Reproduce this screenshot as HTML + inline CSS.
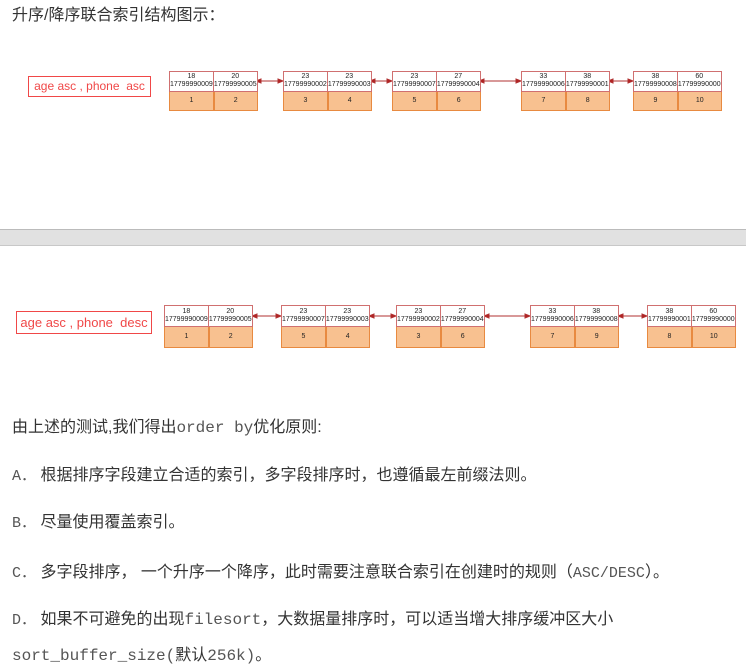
<!DOCTYPE html>
<html><head><meta charset="utf-8"><style>
body{margin:0;width:746px;height:668px;background:#fff;position:relative;overflow:hidden;font-family:"Liberation Sans","Noto Sans CJK SC",sans-serif;color:#333}
.t{position:absolute;left:12px;font-size:16px;white-space:nowrap;line-height:20px}
.m{font-family:"Liberation Mono","Noto Sans CJK SC",monospace;color:#555;font-size:15px}
.n{position:absolute;display:flex;font-family:"Liberation Sans",sans-serif;font-size:7px;color:#222}
.c{flex:1;display:flex;flex-direction:column}
.w{background:#fff;border:1px solid #d07070;text-align:center;line-height:8px;display:flex;flex-direction:column;justify-content:center}
.o{background:#f8c190;border:1px solid #e88a40;border-top:none;text-align:center;display:flex;align-items:center;justify-content:center}
.c+.c .w{border-left:none}.c+.c .o{border-left:1px solid #e88a40}
.lbl{position:absolute;border:1px solid #f04848;color:#f04848;font-size:12px;text-align:center;white-space:nowrap}
</style></head><body>
<div class="t" style="top:6px">升序/降序联合索引结构图示：</div>
<div class="lbl" style="left:28px;top:76px;width:121px;height:19px;line-height:19px">age asc , phone &nbsp;asc</div>
<div class="lbl" style="left:16px;top:311px;width:134px;height:21px;line-height:21px;font-size:13px">age asc , phone &nbsp;desc</div>

<div style="position:absolute;left:0;top:229px;width:746px;height:17px;background:#e1e1e1;border-top:1px solid #bbb;border-bottom:1px solid #c8c8c8;box-sizing:border-box"></div>

<svg width="746" height="668" style="position:absolute;left:0;top:0" fill="#b02020" stroke="#b03030">
<g stroke-width="1">
<line x1="258" y1="81" x2="281" y2="81"/><polygon points="256,81 261,79 261,83"/><polygon points="283,81 278,79 278,83"/>
<line x1="372" y1="81" x2="390" y2="81"/><polygon points="370,81 375,79 375,83"/><polygon points="392,81 387,79 387,83"/>
<line x1="481" y1="81" x2="519" y2="81"/><polygon points="479,81 484,79 484,83"/><polygon points="521,81 516,79 516,83"/>
<line x1="610" y1="81" x2="631" y2="81"/><polygon points="608,81 613,79 613,83"/><polygon points="633,81 628,79 628,83"/>
<line x1="254" y1="316" x2="279" y2="316"/><polygon points="252,316 257,314 257,318"/><polygon points="281,316 276,314 276,318"/>
<line x1="371" y1="316" x2="394" y2="316"/><polygon points="369,316 374,314 374,318"/><polygon points="396,316 391,314 391,318"/>
<line x1="486" y1="316" x2="528" y2="316"/><polygon points="484,316 489,314 489,318"/><polygon points="530,316 525,314 525,318"/>
<line x1="620" y1="316" x2="645" y2="316"/><polygon points="618,316 623,314 623,318"/><polygon points="647,316 642,314 642,318"/>
</g></svg>

<div class="n" style="left:169px;top:71px;width:87px;height:40px"><div class="c"><div class="w" style="height:20px">18<br>17799990009</div><div class="o" style="height:20px">1</div></div><div class="c"><div class="w" style="height:20px">20<br>17799990005</div><div class="o" style="height:20px">2</div></div></div>
<div class="n" style="left:283px;top:71px;width:87px;height:40px"><div class="c"><div class="w" style="height:20px">23<br>17799990002</div><div class="o" style="height:20px">3</div></div><div class="c"><div class="w" style="height:20px">23<br>17799990003</div><div class="o" style="height:20px">4</div></div></div>
<div class="n" style="left:392px;top:71px;width:87px;height:40px"><div class="c"><div class="w" style="height:20px">23<br>17799990007</div><div class="o" style="height:20px">5</div></div><div class="c"><div class="w" style="height:20px">27<br>17799990004</div><div class="o" style="height:20px">6</div></div></div>
<div class="n" style="left:521px;top:71px;width:87px;height:40px"><div class="c"><div class="w" style="height:20px">33<br>17799990006</div><div class="o" style="height:20px">7</div></div><div class="c"><div class="w" style="height:20px">38<br>17799990001</div><div class="o" style="height:20px">8</div></div></div>
<div class="n" style="left:633px;top:71px;width:87px;height:40px"><div class="c"><div class="w" style="height:20px">38<br>17799990008</div><div class="o" style="height:20px">9</div></div><div class="c"><div class="w" style="height:20px">60<br>17799990000</div><div class="o" style="height:20px">10</div></div></div>

<div class="n" style="left:164px;top:305px;width:88px;height:43px"><div class="c"><div class="w" style="height:21px">18<br>17799990009</div><div class="o" style="height:22px">1</div></div><div class="c"><div class="w" style="height:21px">20<br>17799990005</div><div class="o" style="height:22px">2</div></div></div>
<div class="n" style="left:281px;top:305px;width:88px;height:43px"><div class="c"><div class="w" style="height:21px">23<br>17799990007</div><div class="o" style="height:22px">5</div></div><div class="c"><div class="w" style="height:21px">23<br>17799990003</div><div class="o" style="height:22px">4</div></div></div>
<div class="n" style="left:396px;top:305px;width:88px;height:43px"><div class="c"><div class="w" style="height:21px">23<br>17799990002</div><div class="o" style="height:22px">3</div></div><div class="c"><div class="w" style="height:21px">27<br>17799990004</div><div class="o" style="height:22px">6</div></div></div>
<div class="n" style="left:530px;top:305px;width:88px;height:43px"><div class="c"><div class="w" style="height:21px">33<br>17799990006</div><div class="o" style="height:22px">7</div></div><div class="c"><div class="w" style="height:21px">38<br>17799990008</div><div class="o" style="height:22px">9</div></div></div>
<div class="n" style="left:647px;top:305px;width:88px;height:43px"><div class="c"><div class="w" style="height:21px">38<br>17799990001</div><div class="o" style="height:22px">8</div></div><div class="c"><div class="w" style="height:21px">60<br>17799990000</div><div class="o" style="height:22px">10</div></div></div>

<div class="t" style="top:418px">由上述的测试,我们得出<span class="m" style="font-size:16px">order by</span>优化原则:</div>
<div class="t" style="top:466px"><span class="m">A．</span> 根据排序字段建立合适的索引，多字段排序时，也遵循最左前缀法则。</div>
<div class="t" style="top:513px"><span class="m">B．</span> 尽量使用覆盖索引。</div>
<div class="t" style="top:563px"><span class="m">C．</span> 多字段排序， 一个升序一个降序，此时需要注意联合索引在创建时的规则（<span class="m">ASC/DESC</span>）。</div>
<div class="t" style="top:610px"><span class="m">D．</span> 如果不可避免的出现<span class="m" style="font-size:16px">filesort</span>，大数据量排序时，可以适当增大排序缓冲区大小</div>
<div class="t" style="top:646px"><span class="m" style="font-size:16px">sort_buffer_size(</span>默认<span class="m" style="font-size:16px">256k)</span>。</div>
</body></html>
